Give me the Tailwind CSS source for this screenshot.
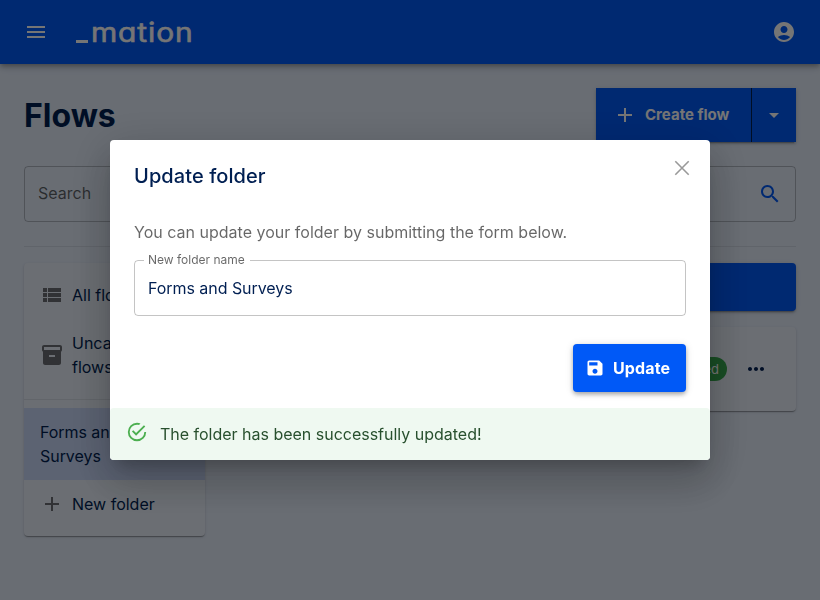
<!DOCTYPE html>
<html lang="en">
<head>
    <meta charset="UTF-8">
    <meta name="viewport" content="width=device-width, initial-scale=1.0">
    <title>Flows - Automation</title>
    <script src="https://cdn.jsdelivr.net/npm/@tailwindcss/browser@4"></script>
</head>
<body class="h-[600px] overflow-hidden bg-[#e4edfb] font-['Inter',sans-serif] text-base leading-6 tracking-normal text-[#001f52]">
    <!-- Navbar -->
    <header class="relative flex h-16 items-center justify-between bg-[#0059f7] px-6 text-white shadow-[0_2px_4px_-1px_rgba(0,0,0,0.2),0_4px_5px_rgba(0,0,0,0.14),0_1px_10px_rgba(0,0,0,0.12)]">
        <div class="flex items-center gap-7">
            <button aria-label="Open menu">
                <svg class="size-6" viewBox="0 0 24 24" fill="currentColor"><path d="M3 18h18v-2H3v2zm0-5h18v-2H3v2zm0-7v2h18V6H3z"/></svg>
            </button>
            <!-- Logo -->
            <div class="flex h-10 items-end gap-[3px]">
                <span class="mb-[9px] h-[3px] w-3 bg-white"></span>
                <span class="mb-px origin-left scale-x-115 text-[26px] leading-9 tracking-[0.8px] [-webkit-text-stroke:0.6px_white] [font-feature-settings:'cv11','ss01']">mation</span>
            </div>
        </div>
        <button aria-label="Account">
            <svg class="size-6" viewBox="0 0 24 24" fill="currentColor"><path d="M12 2C6.480 2 2 6.480 2 12s4.480 10 10 10 10-4.480 10-10S17.520 2 12 2zm0 4c1.930 0 3.500 1.570 3.500 3.500S13.930 13 12 13s-3.500-1.570-3.500-3.500S10.070 6 12 6zm0 14c-2.030 0-4.430-.820-6.140-2.880C7.550 15.800 9.680 15 12 15s4.450.800 6.140 2.120C16.430 19.180 14.030 20 12 20z"/></svg>
        </button>
    </header>

    <main class="px-6 pt-6">
        <div class="flex h-[54px] items-center justify-between">
            <h1 class="pt-[2px] text-[32px] leading-none font-bold">Flows</h1>
            <div class="flex h-[54px] w-[200px] bg-[#0059f7] text-[15px] font-bold text-white shadow-[0_3px_1px_-2px_rgba(0,0,0,0.2),0_2px_2px_rgba(0,0,0,0.14),0_1px_5px_rgba(0,0,0,0.12)]">
                <button class="flex w-[156px] items-center gap-2 border-r border-[#001f52] pl-[17px]">
                    <svg class="size-6" viewBox="0 0 24 24" fill="currentColor"><path d="M19 13h-6v6h-2v-6H5v-2h6V5h2v6h6v2z"/></svg>
                    Create flow
                </button>
                <button class="flex flex-1 items-center justify-center" aria-label="More options">
                    <svg class="size-6" viewBox="0 0 24 24" fill="currentColor"><path d="m7 10 5 5 5-5z"/></svg>
                </button>
            </div>
        </div>

        <!-- Search -->
        <div class="mt-6 flex h-14 items-center justify-between rounded border border-black/23 pr-[13px] pl-[13px]">
            <span class="pb-0.5 text-black/60">Search</span>
            <svg class="size-6 text-[#0059f7]" viewBox="0 0 24 24" fill="currentColor"><path d="M15.500 14h-.790l-.280-.270C15.410 12.590 16 11.110 16 9.500 16 5.910 13.090 3 9.500 3S3 5.910 3 9.500 5.910 16 9.500 16c1.610 0 3.090-.590 4.230-1.570l.270.280v.790l5 4.990L20.490 19l-4.990-5zm-6 0C7.010 14 5 11.990 5 9.500S7.010 5 9.500 5 14 7.010 14 9.500 11.990 14 9.500 14z"/></svg>
        </div>
        <hr class="mt-6 border-black/8">

        <div class="mt-4 flex items-start gap-6">
            <!-- Folders -->
            <aside class="w-[181px] rounded bg-[#e9f0fb] py-2 shadow-[0_2px_1px_-1px_rgba(0,0,0,0.2),0_1px_1px_rgba(0,0,0,0.14),0_1px_3px_rgba(0,0,0,0.12)]">
                <div class="flex h-12 items-center gap-2 px-4">
                    <svg class="size-6 shrink-0 text-black/54" viewBox="0 0 24 24" fill="currentColor"><path d="M3 14h4v-4H3v4zm0 5h4v-4H3v4zM3 9h4V5H3v4zm5 5h13v-4H8v4zm0 5h13v-4H8v4zM8 5v4h13V5H8z"/></svg>
                    All flows
                </div>
                <div class="flex h-[72px] items-center gap-2 px-4">
                    <svg class="size-6 shrink-0 text-black/54" viewBox="0 0 24 24" fill="currentColor"><path d="M20 2H4c-1 0-2 .900-2 2v3.010c0 .720.430 1.340 1 1.690V20c0 1.100 1.100 2 2 2h14c.900 0 2-.900 2-2V8.700c.570-.350 1-.970 1-1.690V4c0-1.100-1-2-2-2zm-5 12H9v-2h6v2zm5-7H4V4h16v3z"/></svg>
                    <span>Uncategorized flows</span>
                </div>
                <hr class="my-2 border-black/8">
                <div class="flex h-[72px] items-center bg-[#c8d7f9] px-4"><span class="tracking-[-0.05px]">Forms and<br>Surveys</span></div>
                <div class="flex h-12 items-center gap-2 px-4">
                    <svg class="size-6 shrink-0 text-black/54" viewBox="0 0 24 24" fill="currentColor"><path d="M19 13h-6v6h-2v-6H5v-2h6V5h2v6h6v2z"/></svg>
                    New folder
                </div>
            </aside>

            <!-- Flow list -->
            <section class="flex flex-1 flex-col gap-4">
                <div class="h-12 rounded bg-[#0059f7] shadow-[0_3px_1px_-2px_rgba(0,0,0,0.2),0_2px_2px_rgba(0,0,0,0.14),0_1px_5px_rgba(0,0,0,0.12)]"></div>
                <div class="flex h-[84px] items-center justify-end gap-[17px] rounded bg-[#e9f0fb] pr-7 shadow-[0_2px_1px_-1px_rgba(0,0,0,0.2),0_1px_1px_rgba(0,0,0,0.14),0_1px_3px_rgba(0,0,0,0.12)]">
                    <span class="flex h-6 items-center rounded-full bg-[#36a84e] px-2 text-[13px] text-white">published</span>
                    <svg class="size-6" viewBox="0 0 24 24" fill="currentColor"><path d="M6 10c-1.100 0-2 .900-2 2s.900 2 2 2 2-.900 2-2-.900-2-2-2zm12 0c-1.100 0-2 .900-2 2s.900 2 2 2 2-.900 2-2-.900-2-2-2zm-6 0c-1.100 0-2 .900-2 2s.900 2 2 2 2-.900 2-2-.900-2-2-2z"/></svg>
                </div>
            </section>
        </div>
    </main>

    <!-- Update folder dialog -->
    <div class="fixed inset-0 flex items-center justify-center bg-black/54">
        <div role="dialog" class="relative flex h-80 w-[600px] flex-col rounded bg-white shadow-[0_11px_15px_-7px_rgba(0,0,0,0.2),0_24px_38px_3px_rgba(0,0,0,0.14),0_9px_46px_8px_rgba(0,0,0,0.12)]">
            <h2 class="px-6 pt-5 text-xl leading-8 font-medium tracking-[0.08px]">Update folder</h2>
            <button class="absolute top-4 right-4 text-black/40" aria-label="Close">
                <svg class="size-6" viewBox="0 0 24 24" fill="none" stroke="currentColor" stroke-width="1.600"><path d="M5.300 5.300 18.700 18.700M18.700 5.300 5.300 18.700"/></svg>
            </button>
            <div class="flex flex-col px-6 pt-7">
                <p class="tracking-[0.01px] text-black/60">You can update your folder by submitting the form below.</p>
                <fieldset class="mt-[7px] h-[65px] rounded border border-black/23 px-[9px]">
                    <legend class="h-[18px] pr-[5px] pl-1 text-xs leading-[17px] text-black/60">New folder name</legend>
                    <div class="pt-[7px] pl-1 tracking-[-0.05px]">Forms and Surveys</div>
                </fieldset>
            </div>
            <div class="flex flex-1 items-end justify-end px-6 pb-4">
                <button class="flex h-12 w-[113px] items-center gap-2 rounded bg-[#0059f7] pl-3 font-bold tracking-[0.15px] text-white shadow-[0_3px_5px_-1px_rgba(0,0,0,0.2),0_2px_4px_rgba(0,0,0,0.14),0_1px_8px_rgba(0,0,0,0.12)]">
                    <svg class="size-5" viewBox="0 0 24 24" fill="currentColor"><path d="M17 3H5c-1.110 0-2 .900-2 2v14c0 1.100.890 2 2 2h14c1.100 0 2-.900 2-2V7l-4-4zm-5 16c-1.660 0-3-1.340-3-3s1.340-3 3-3 3 1.340 3 3-1.340 3-3 3zm3-10H5V5h10v4z"/></svg>
                    Update
                </button>
            </div>
            <div role="alert" class="flex h-[52px] gap-3 rounded bg-[#eff9f1] px-4 text-[#28502e]">
                <svg class="mt-[13px] size-[22px] text-[#4caf50]" viewBox="0 0 24 24" fill="currentColor"><path d="M20 12a8 8 0 0 1-8 8 8 8 0 0 1-8-8 8 8 0 0 1 8-8c.760 0 1.500.110 2.200.310l1.570-1.570A9.822 9.822 0 0 0 12 2 10 10 0 0 0 2 12a10 10 0 0 0 10 10 10 10 0 0 0 10-10M7.910 10.080 6.500 11.500 11 16 21 6l-1.410-1.420L11 13.170l-3.090-3.090z"/></svg>
                <span class="pt-[14px] tracking-[-0.01px]">The folder has been successfully updated!</span>
            </div>
        </div>
    </div>
</body>
</html>
